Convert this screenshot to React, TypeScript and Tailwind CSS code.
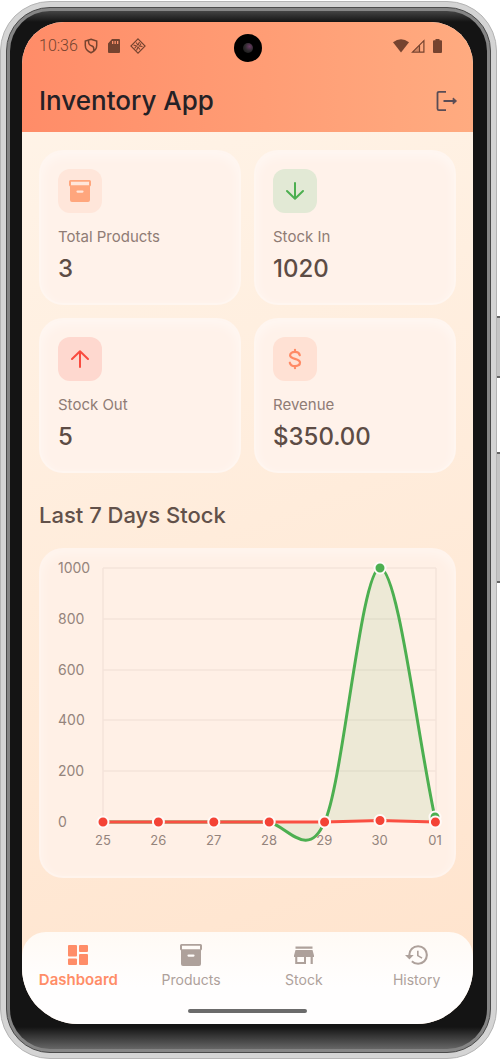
import type { ReactNode } from 'react';

type Stat = { label: string; value: string; tile: string; icon: ReactNode };

const stats: Stat[] = [
  {
    label: 'Total Products',
    value: '3',
    tile: 'bg-[#ffe6da] text-[#ffa67d]',
    icon: <ArchiveIcon />,
  },
  {
    label: 'Stock In',
    value: '1020',
    tile: 'bg-[#e2e9d5] text-[#4caf50]',
    icon: (
      <svg viewBox="0 0 24 24" className="size-6" fill="none" stroke="currentColor" strokeWidth="2" strokeLinecap="round" strokeLinejoin="round" aria-hidden="true">
        <path d="M12 4v15.500M4 12l8 7.800 8-7.800" />
      </svg>
    ),
  },
  {
    label: 'Stock Out',
    value: '5',
    tile: 'bg-[#fed8cf] text-[#f94b3f]',
    icon: (
      <svg viewBox="0 0 24 24" className="size-6" fill="none" stroke="currentColor" strokeWidth="2" strokeLinecap="round" strokeLinejoin="round" aria-hidden="true">
        <path d="M12 20V4.500M4 12l8-7.800 8 7.800" />
      </svg>
    ),
  },
  {
    label: 'Revenue',
    value: '$350.00',
    tile: 'bg-[#ffe1d4] text-[#ff8a65]',
    icon: (
      <svg viewBox="0 0 24 24" className="size-6" fill="none" stroke="currentColor" strokeWidth="2.200" strokeLinecap="round" aria-hidden="true">
        <path d="M16.800 8.200C16.300 6.200 14.500 4.900 12 4.900c-3 0-4.900 1.400-4.900 3.400 0 4.600 9.900 2.500 9.900 7.300 0 2.100-2 3.500-5 3.500-2.900 0-4.700-1.300-5.200-3.400M12 2.800v2M12 19.200v2" />
      </svg>
    ),
  },
];

const days = ['25', '26', '27', '28', '29', '30', '01'];
const levels = ['1000', '800', '600', '400', '200', '0'];

function ArchiveIcon() {
  return (
    <svg viewBox="0 0 24 24" className="size-6" fill="currentColor" aria-hidden="true">
      <path fillRule="evenodd" d="M2.500 1h19A1.500 1.500 0 0 1 23 2.500v3.500a1.500 1.500 0 0 1-1 1.400V21a2 2 0 0 1-2 2H4a2 2 0 0 1-2-2V7.400A1.500 1.500 0 0 1 1 6V2.500A1.500 1.500 0 0 1 2.500 1ZM3 2.800v3.400h18V2.800ZM9.500 11.500a1 1 0 0 0 0 2.200h5a1 1 0 0 0 0-2.200Z" />
    </svg>
  );
}

function StatusBar() {
  return (
    <div className="flex h-12 items-center justify-between pr-[31px] pl-[17px] text-[#75432f]">
      <div className="flex items-center">
        <span className="font-['Roboto',sans-serif] text-base leading-5 font-light">10:36</span>
        <svg viewBox="0 0 14 16" className="ml-1.5 h-4 w-3.5" fill="none" stroke="currentColor" strokeWidth="1.500" aria-hidden="true">
          <path d="M7 1.200 12.700 3v4.500c0 3.300-2.500 5.900-5.700 7.200C3.800 13.400 1.300 10.800 1.300 7.500V3ZM4.500 2.500c0 4 1 4.500 3.500 5.500 2.500 1 2 3 1.500 5" />
        </svg>
        <svg viewBox="0 0 12 14" className="ml-2.5 h-3.5 w-3" fill="currentColor" aria-hidden="true">
          <path fillRule="evenodd" d="M4 0h7q1 0 1 1v12q0 1-1 1H1q-1 0-1-1V4.500ZM4 2v3h1.300V2ZM6.500 2v3h1.300V2ZM9 2v3h1.300V2Z" />
        </svg>
        <svg viewBox="0 0 16 16" className="ml-2.5 size-4" fill="none" stroke="currentColor" strokeWidth="1.100" aria-hidden="true">
          <path d="m8 .9 7.100 7.100L8 15.100.9 8Z" />
          <path d="M6 4.500 8 7l1.500-3M11 5.500 9.500 8l3 .5M10 11.500 8 9l-1.500 3.500M4.500 10.500 6.500 8 3.500 7" />
        </svg>
      </div>
      <div className="flex items-center">
        <svg viewBox="0 0 16 14" className="h-3.5 w-4" fill="currentColor" aria-hidden="true">
          <path d="M0 3.200Q8-2.500 16 3.200L8 13.500Z" />
        </svg>
        <svg viewBox="0 0 14 14" className="ml-0.5 h-3.5 w-3.5" fill="none" stroke="currentColor" strokeWidth="1.200" aria-hidden="true">
          <path d="M12.900 1.700v11.400H1.500ZM8.500 6v7" />
          <path d="M8 6.500v6H2Z" fill="currentColor" fillOpacity="0.350" stroke="none" />
        </svg>
        <svg viewBox="0 0 9 14" className="ml-2 h-3.5 w-[9px]" fill="currentColor" aria-hidden="true">
          <path d="M2.500 0h4v1.200H8q1 0 1 1V13q0 1-1 1H1q-1 0-1-1V2.200q0-1 1-1h1.500Z" />
        </svg>
      </div>
    </div>
  );
}

function StatCard({ stat }: { stat: Stat }) {
  return (
    <article className="rounded-3xl border-2 border-white/30 bg-[#fff2ea] px-[17px] pt-[17px] pb-4 shadow-[inset_0_4px_12px_rgba(255,255,255,0.450)]">
      <div className={`flex size-11 items-center justify-center rounded-xl ${stat.tile}`}>{stat.icon}</div>
      <p className="mt-3.5 text-[15px] leading-5 text-[#8f7c75]">{stat.label}</p>
      <p className="mt-1 text-2xl leading-9 font-medium text-[#5d4c45]">{stat.value}</p>
    </article>
  );
}

function StockChart() {
  return (
    <div className="rounded-3xl border-2 border-white/30 bg-[#fff0e6] pt-2 pr-[18px] pb-[26px] pl-[17px] text-sm text-[#94847c] shadow-[inset_0_4px_12px_rgba(255,255,255,0.400)]">
      <div className="flex">
        <div className="flex w-[45px] shrink-0 flex-col justify-between">
          {levels.map((level) => (
            <span key={level} className="leading-5">{level}</span>
          ))}
        </div>
        <svg viewBox="0 0 333 274" className="h-auto min-w-0 flex-1 overflow-visible" role="img" aria-label="Stock in and stock out over the last seven days">
          <path d="M0 10H333M0 61H333M0 112H333M0 162H333M0 213H333M0 10V264M333 10V264" fill="none" stroke="#f5e3da" strokeWidth="1.500" />
          <path d="M166 264C184 266 203 303 221.500 264C240 226 258 11 277 10C295 11 314 176 332 260V264Z" fill="#4caf50" fillOpacity="0.100" />
          <path d="M0 264H166C184 268 205 303 221.500 264C240 226 258 11 277 10C295 11 314 176 332 260" fill="none" stroke="#4caf50" strokeWidth="3" />
          <g fill="#4caf50" stroke="#fffaf7" strokeWidth="2">
            <circle cx="277" cy="10" r="5.500" />
            <circle cx="332" cy="259" r="5.500" />
          </g>
          <path d="M0 264H221.500L277 262.500L332 264" fill="none" stroke="#fa4f42" strokeWidth="3" />
          <g fill="#f44336" stroke="#fffaf7" strokeWidth="2">
            {days.map((day, i) => (
              <circle key={day} cx={i * 55.4} cy={i === 5 ? 262.5 : 264} r="5.500" />
            ))}
          </g>
        </svg>
      </div>
      <div className="-mt-0.5 -mr-2 ml-9 flex justify-between text-[13px]">
        {days.map((day) => (
          <span key={day} className="w-[18px] text-center leading-5">{day}</span>
        ))}
      </div>
    </div>
  );
}

function NavItem({ label, active, children }: { label: string; active?: boolean; children: ReactNode }) {
  return (
    <a
      href="#"
      aria-current={active ? 'page' : undefined}
      className={
        active
          ? 'flex flex-col items-center gap-[3px] text-[15px] leading-5 font-semibold text-[#ff8d68]'
          : 'flex flex-col items-center gap-[3px] text-sm leading-5 text-[#aea19b]'
      }
    >
      {children}
      <span>{label}</span>
    </a>
  );
}

function BottomNav() {
  return (
    <nav aria-label="Main" className="rounded-t-3xl bg-linear-to-b from-[#fffaf5] to-[#fffefe] to-60% py-[11px]">
      <div className="grid grid-cols-4">
        <NavItem label="Dashboard" active>
          <svg viewBox="0 0 24 24" className="size-6" fill="currentColor" aria-hidden="true">
            <rect x="2" y="2" width="9" height="11.500" rx="1" />
            <rect x="13" y="2" width="9" height="7" rx="1" />
            <rect x="2" y="15.500" width="9" height="6.500" rx="1" />
            <rect x="13" y="11" width="9" height="11" rx="1" />
          </svg>
        </NavItem>
        <NavItem label="Products">
          <ArchiveIcon />
        </NavItem>
        <NavItem label="Stock">
          <svg viewBox="0 0 24 24" className="size-6" fill="currentColor" aria-hidden="true">
            <path d="M3.500 3.500h17v2.200h-17ZM3.500 7h17l1.500 5.500V14h-1.200v7h-2.200v-7H14v7H3.200v-7H2v-1.500ZM5.300 14v5H12v-5Z" fillRule="evenodd" />
          </svg>
        </NavItem>
        <NavItem label="History">
          <svg viewBox="1 1 22 22" className="size-6" fill="currentColor" aria-hidden="true">
            <path d="M13 3a9 9 0 0 0-9 9H1l3.900 3.900.07.140L9 12H6c0-3.870 3.130-7 7-7s7 3.130 7 7-3.130 7-7 7c-1.930 0-3.680-.79-4.940-2.060l-1.420 1.420A8.950 8.950 0 0 0 13 21a9 9 0 0 0 0-18m-1 5v5l4.280 2.540.72-1.210-3.500-2.080V8z" />
          </svg>
        </NavItem>
      </div>
      <div className="mx-auto mt-[19px] h-1 w-[119px] rounded-full bg-[#6b6b6b]" />
    </nav>
  );
}

export default function App() {
  return (
    <div className="relative bg-white pt-px pr-[3px] pb-px font-['Inter',sans-serif]">
      <div className="absolute top-[316px] right-0 h-[62px] w-1 border-y-2 border-[#666] bg-[#c4c4c4]" />
      <div className="absolute top-[452px] right-0 h-[131px] w-1 border-y-2 border-[#666] bg-[#c4c4c4]" />
      <div className="relative rounded-[50px] border border-[#b4b4b4] bg-[#d4d4d4] p-[5px]">
        <div className="rounded-[44px] border border-[#4a4a4a] bg-[#858585] p-[3px]">
          <div className="rounded-[40px] bg-[linear-gradient(to_bottom,#444_0px,#141414_11px,#141414_calc(100%-22px),#666_100%)] pt-[11px] pr-3.5 pb-[25px] pl-3">
            <div className="relative overflow-hidden rounded-t-[42px] rounded-b-[56px] bg-linear-160 from-[#fff5ea] to-[#ffe3cc]">
              <header className="bg-linear-to-r from-[#ff8c68] to-[#ffab80]">
                <StatusBar />
                <div className="flex h-[62px] items-center justify-between pr-3.5 pl-[17px]">
                  <h1 className="text-[26px] leading-8 font-medium text-[#252126]">Inventory App</h1>
                  <button type="button" aria-label="Log out" className="text-[#594c55]">
                    <svg viewBox="0 0 24 24" className="size-6" fill="none" stroke="currentColor" strokeWidth="1.800" strokeLinejoin="round" aria-hidden="true">
                      <path d="M11 2.800H4Q2.500 2.800 2.500 4.300v15.400Q2.500 21.200 4 21.200H11M8.500 12h12" />
                      <path d="m18.200 9 3.300 3-3.300 3Z" fill="currentColor" strokeWidth="1" />
                    </svg>
                  </button>
                </div>
              </header>
              <div className="absolute top-3 left-1/2 flex size-7 -translate-x-1/2 items-center justify-center rounded-full bg-black">
                <div className="size-2.5 rounded-full bg-radial-[at_65%_35%] from-[#6a3a62] via-[#2c2a2c] to-[#121212]" />
              </div>
              <main className="px-[17px] pt-[18px] pb-[54px]">
                <section aria-label="Summary" className="grid grid-cols-2 gap-[13px]">
                  {stats.map((stat) => (
                    <StatCard key={stat.label} stat={stat} />
                  ))}
                </section>
                <section>
                  <h2 className="mt-6 mb-[15px] text-[22px] leading-9 font-medium text-[#62514a]">Last 7 Days Stock</h2>
                  <StockChart />
                </section>
              </main>
              <BottomNav />
            </div>
          </div>
        </div>
      </div>
    </div>
  );
}
